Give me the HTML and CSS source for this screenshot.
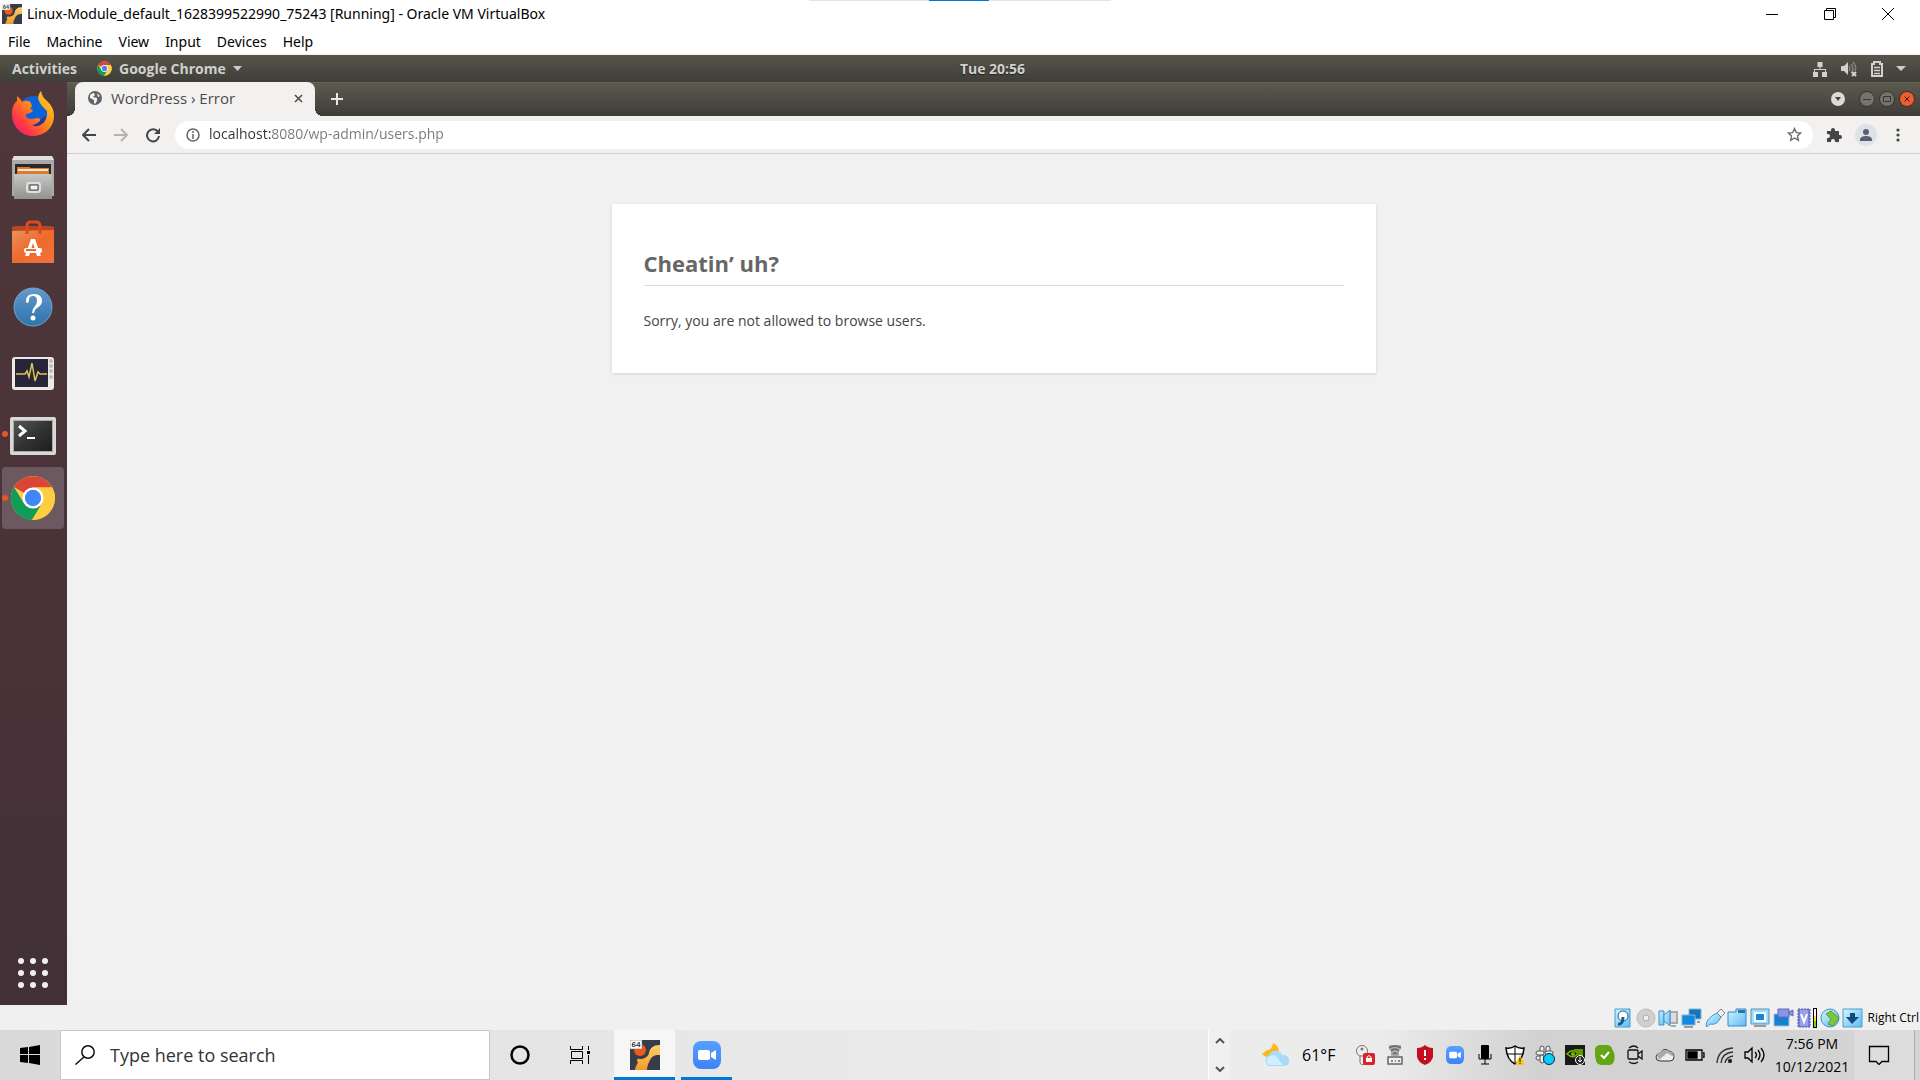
FILE: index.html
```html
<!DOCTYPE html>
<html lang="en">
<head>
<meta charset="utf-8">
<title>Linux-Module_default_1628399522990_75243 [Running] - Oracle VM VirtualBox</title>
<link rel="stylesheet" href="styles.css">
</head>
<body>
<svg class="defs" width="0" height="0" aria-hidden="true">
  <defs>
    <linearGradient id="gold" x1="0" y1="0" x2="0" y2="1"><stop offset="0" stop-color="#ffd070"/><stop offset="1" stop-color="#f09a28"/></linearGradient>
    <linearGradient id="fox" x1="1" y1="0" x2="0" y2="1"><stop offset="0" stop-color="#ffe02a"/><stop offset=".45" stop-color="#ff8a16"/><stop offset=".75" stop-color="#ff3647"/><stop offset="1" stop-color="#e3178f"/></linearGradient>
    <linearGradient id="steel" x1="0" y1="0" x2="0" y2="1"><stop offset="0" stop-color="#c6c6c4"/><stop offset="1" stop-color="#92928f"/></linearGradient>
    <linearGradient id="bag" x1="0" y1="0" x2="1" y2="1"><stop offset="0" stop-color="#e8935a"/><stop offset=".5" stop-color="#ee6a2c"/><stop offset="1" stop-color="#f4713f"/></linearGradient>
    <linearGradient id="helpb" x1="0" y1="0" x2="0" y2="1"><stop offset="0" stop-color="#6699cc"/><stop offset="1" stop-color="#2c73ab"/></linearGradient>
    <linearGradient id="term" x1="0" y1="0" x2="1" y2="1"><stop offset="0" stop-color="#565656"/><stop offset=".5" stop-color="#333"/><stop offset="1" stop-color="#1d1d1d"/></linearGradient>
    <linearGradient id="sky" x1="0" y1="0" x2="1" y2="1"><stop offset="0" stop-color="#d6f2ff"/><stop offset="1" stop-color="#5cbcf4"/></linearGradient>
    <linearGradient id="zoomb" x1="0" y1="0" x2="0" y2="1"><stop offset="0" stop-color="#56a0ff"/><stop offset="1" stop-color="#3f83f8"/></linearGradient>
    <symbol id="chrome" viewBox="0 0 48 48">
      <circle cx="24" cy="24" r="23" fill="#ffcd40"/>
      <path d="M24 24 4.100 12.500A23 23 0 0 1 44 13H24z" fill="#db4437"/>
      <path d="M4.100 12.500A23 23 0 0 0 23 47L33.500 29.500 24 24 14.500 29.500z" fill="#0f9d58"/>
      <path d="M24 13h20a23 23 0 0 1-21 34l11-18z" fill="#ffcd40"/>
      <circle cx="24" cy="24" r="11" fill="#fff"/><circle cx="24" cy="24" r="8.500" fill="#4285f4"/>
    </symbol>
    <symbol id="vbox" viewBox="0 0 30 30">
      <path d="M0 0h30v30H0z" fill="#363c49"/><circle cx="10" cy="10" r="6" fill="#f0591c"/>
      <path d="M30 5v10c-7 0-8 2-10 5-2 4-3 7-3 10H5c0-3 2-5 3-8-2-1-1-4 2-3 4 0 8-2 9-6 1-5 4-8 11-8z" fill="url(#gold)"/>
      <path d="M0 0h12v9H0z" fill="#fff" stroke="#777" stroke-width=".600"/>
      <text x="6" y="7" font-family="Liberation Sans" font-size="8" font-weight="bold" text-anchor="middle" fill="#333">64</text>
    </symbol>
    <symbol id="zoom" viewBox="0 0 28 28">
      <rect width="28" height="28" rx="8" fill="url(#zoomb)"/><rect x="5" y="9" width="12" height="10" rx="2" fill="#fff"/><path d="M18 12l5-3v10l-5-3z" fill="#fff"/>
    </symbol>
  </defs>
</svg>

<header class="titlebar">
  <svg class="app-icon" viewBox="0 0 30 30"><use href="#vbox"/></svg>
  <span class="window-title">Linux-Module_default_1628399522990_75243 [Running] - Oracle VM VirtualBox</span>
  <div class="caption-buttons">
    <button aria-label="Minimize"><svg width="14" height="14"><path d="M1 7.500h12" stroke="#000"/></svg></button>
    <button aria-label="Restore"><svg width="14" height="14" fill="none" stroke="#000"><path d="M1.500 3.500h9v9h-9zM3.500 3V1.500h9v9H11"/></svg></button>
    <button aria-label="Close"><svg width="14" height="14"><path d="M1 1l12 12M13 1 1 13" stroke="#000"/></svg></button>
  </div>
  <div class="share-strip"></div>
</header>
<nav class="menubar">
  <button>File</button><button>Machine</button><button>View</button><button>Input</button><button>Devices</button><button>Help</button>
</nav>

<div class="panel">
  <div class="panel-left">
    <button class="activities">Activities</button>
    <button class="app-menu"><svg width="15" height="15"><use href="#chrome"/></svg>Google Chrome<svg width="9" height="5"><path d="M0 0h9L4.500 5z" fill="#ccc"/></svg></button>
  </div>
  <time class="panel-clock">Tue 20:56</time>
  <div class="indicators">
    <svg width="16" height="16" fill="#d0d0ce"><path d="M5.500 1h5v5h-5zM1 11h5v5H1zM10 11h5v5h-5zM7.500 6h1v2H14v3h-1V9H3v2H2V8h5.500z"/></svg>
    <svg width="18" height="16"><path d="M1 5h3l4-4v13l-4-4H1z" fill="#d0d0ce"/><g fill="none" stroke="#85837b" stroke-width="1.500"><path d="M9 5q2 3 0 5M11 3q4 5 0 9M13 1q4 5 2 9"/></g><path d="M12 11l4 4m0-4-4 4" stroke="#d0d0ce" stroke-width="2"/></svg>
    <svg width="14" height="18" fill="none" stroke="#d0d0ce" stroke-width="2"><path d="M2 4h2V2h6v2h2v12H2z"/><path d="M4 7.500h6M4 10.500h6M4 13.500h6" stroke-width="1.500"/></svg>
    <svg width="10" height="6"><path d="M0 0h10L5 5z" fill="#ccc"/></svg>
  </div>
</div>

<div class="desktop">
  <aside class="dock">
    <button aria-label="Firefox"><svg width="44" height="46" viewBox="0 0 44 46"><circle cx="23" cy="22" r="17" fill="#0c63d8"/><path d="M13 28q10 9 22-4l-4 14-14-1z" fill="#32318c"/><path d="M1 23C1 16 3 12 6 10V5q4 3 5 6 3-2 7-1 2 1 3 5l-2 3 3 1q-1 3-7 4-1 4 4 5 4 0 7-1 4 0 3 3-3 3-8 4 5 3 10-1 6-4 5-13Q28 13 27 7q0-4 3-7 1 6 6 10 7 6 7 15c0 11-9 20-21 20S1 35 1 23z" fill="url(#fox)"/></svg></button>
    <button aria-label="Files"><svg width="44" height="46" viewBox="0 0 44 46"><path d="M1 5 3 1h38l2 4v36H1z" fill="#aaa"/><path d="M1 5 3 1h38l2 4z" fill="#e1dfdf"/><path d="M4 9h36v11H4z" fill="#2d2928"/><path d="M6 12h12l2 1h18v7H6z" fill="#db7c35"/><path d="M7 15h30" stroke="#fce5cc" stroke-width="2"/><path d="M3 19h38v25H3z" fill="url(#steel)"/><rect x="16" y="28" width="13" height="9" rx="2" fill="#aaa" stroke="#dedede" stroke-width="2"/><path d="M19 30h8v5h-8z" fill="#f3f3f3" stroke="#4b4b4b"/></svg></button>
    <button aria-label="Ubuntu Software"><svg width="44" height="46" viewBox="0 0 44 46"><path d="M1 8 5 7h34l4 1v7H1z" fill="#bd4620"/><path d="M1 12 43 11v33H1z" fill="url(#bag)"/><path d="M16 15V7q0-4 3-4h6q4 0 4 4v8" fill="none" stroke="#dc4b1b" stroke-width="3"/><path d="M14 37l6-17h4l6 17h-4l-4-13-4 13z" fill="#fff"/><rect x="13" y="29" width="18" height="5" rx="2" fill="#fff"/><path d="M15 31h10" stroke="#ee6a2c" stroke-width="2"/></svg></button>
    <button aria-label="Help"><svg width="44" height="46" viewBox="0 0 44 46"><circle cx="22" cy="24" r="19" fill="url(#helpb)" stroke="#74a4cf"/><path d="M15 18q0-7 8-7 8 0 8 7 0 4-5 7-3 2-3 5h-2q0-4 3-7 2-2 2-5 0-5-4-5-4 0-4 4 0 3-2 3-1 0-1-2z" fill="#fff"/><circle cx="22" cy="35" r="2.500" fill="#fff"/></svg></button>
    <button aria-label="System Monitor"><svg width="44" height="46" viewBox="0 0 44 46"><rect x="1" y="10" width="42" height="33" rx="3" fill="#eee9e6"/><path d="M4 12h33v28H4z" fill="#28243a"/><path d="M5 27h9l2-3 2 6 3-14 3 18 3-9 2 2h7" fill="none" stroke="#d6ca4d" stroke-width="1.500"/><g fill="#bbb"><circle cx="40" cy="14" r="2"/><circle cx="40" cy="19" r="2"/><circle cx="40" cy="24" r="2"/><circle cx="40" cy="30" r="2"/></g></svg></button>
    <button aria-label="Terminal" class="running"><svg width="46" height="46" viewBox="0 0 46 46"><rect y="6" width="46" height="38" rx="2" fill="#d8d8d6"/><path d="M3 9h40v32H3z" fill="#aaa"/><path d="M4 10h38v30H4z" fill="url(#term)"/><path d="M9 15l6 5-6 5" fill="none" stroke="#fff" stroke-width="3"/><path d="M17 27h8" stroke="#fff" stroke-width="2"/></svg></button>
    <button aria-label="Google Chrome" class="running active"><svg width="46" height="46"><use href="#chrome"/></svg></button>
    <button aria-label="Show Applications" class="apps"><svg width="32" height="32" fill="#f2f1f0"><g id="dots"><circle cx="4" cy="4" r="3"/><circle cx="16" cy="4" r="3"/><circle cx="28" cy="4" r="3"/></g><use href="#dots" y="12"/><use href="#dots" y="24"/></svg></button>
  </aside>

  <div class="browser">
    <div class="tabstrip">
      <div class="tab">
        <svg width="14" height="14" viewBox="0 0 14 14"><circle cx="7" cy="7" r="7" fill="#5f6368"/><path d="M2 4q2-2 4-2l1 2-2 2 4 1v3l-2 3-1-1V9L2 7zM9 2l3 3-2 1z" fill="#f2f1f0"/></svg>
        <span>WordPress › Error</span>
        <button aria-label="Close tab"><svg width="9" height="9"><path d="M1 1l7 7M8 1 1 8" stroke="#4b4b4b" stroke-width="1.500"/></svg></button>
      </div>
      <button class="new-tab" aria-label="New tab"><svg width="12" height="12"><path d="M6 0v12M0 6h12" stroke="#e8e6e1" stroke-width="2"/></svg></button>
      <div class="window-buttons">
        <button class="tab-search" aria-label="Search tabs"><svg width="14" height="14"><circle cx="7" cy="7" r="7" fill="#dfdbd2"/><path d="M4 5h6l-3 4z" fill="#45433e"/></svg></button>
        <button aria-label="Minimize"><svg width="16" height="16"><circle cx="8" cy="8" r="7.500" fill="#74736d" stroke="#34332f"/><path d="M4 8.500h8" stroke="#363530"/></svg></button>
        <button aria-label="Maximize"><svg width="16" height="16"><circle cx="8" cy="8" r="7.500" fill="#74736d" stroke="#34332f"/><path d="M4.500 5.500h7v5h-7z" fill="none" stroke="#363530"/></svg></button>
        <button aria-label="Close"><svg width="16" height="16"><circle cx="8" cy="8" r="7.500" fill="#ed5f32" stroke="#512519"/><path d="M5.500 5.500l5 5m0-5-5 5" stroke="#3c1a10"/></svg></button>
      </div>
    </div>
    <div class="toolbar">
      <button aria-label="Back"><svg width="14" height="14" fill="none" stroke="#454545" stroke-width="2"><path d="M14 7H2M7 1 1 7l6 6"/></svg></button>
      <button aria-label="Forward"><svg width="14" height="14" fill="none" stroke="#b5b4b3" stroke-width="2"><path d="M0 7h12M7 1l6 6-6 6"/></svg></button>
      <button aria-label="Reload"><svg width="16" height="16" fill="none" stroke="#454545" stroke-width="2"><path d="M13 5a6 6 0 1 0 1 4"/><path d="M15 1v6H9z" fill="#454545" stroke="none"/></svg></button>
      <div class="omnibox">
        <svg width="14" height="14" fill="none" stroke="#5f6368" stroke-width="1.500"><circle cx="7" cy="7" r="6"/><path d="M7 3v2M7 6v5"/></svg>
        <input type="text" aria-label="Address" value="localhost:8080/wp-admin/users.php">
        <button aria-label="Bookmark"><svg width="15" height="15" viewBox="0 0 15 15" fill="none" stroke="#666" stroke-width="1.300"><path d="M7.500 1.500 9.300 5.600l4.400.4-3.300 3 1 4.300-3.900-2.300-3.900 2.300 1-4.300-3.300-3 4.400-.4z"/></svg></button>
      </div>
      <button aria-label="Extensions"><svg width="16" height="16" viewBox="0 0 16 16"><path d="M1 4h4V3a2 2 0 0 1 4 0v1h4v4h1a2 2 0 0 1 0 4h-1v3H9v-1a2 2 0 0 0-4 0v1H1v-4h1a2 2 0 0 0 0-4H1z" fill="#454545"/></svg></button>
      <button aria-label="Profile"><svg width="22" height="22"><circle cx="11" cy="11" r="11" fill="#dee1e6"/><circle cx="11" cy="8" r="3" fill="#576071"/><path d="M5 17v-2q1-3 6-3t6 3v2z" fill="#576071"/></svg></button>
      <button aria-label="Menu"><svg width="4" height="14" fill="#454545"><circle cx="2" cy="2" r="1.600"/><circle cx="2" cy="7" r="1.600"/><circle cx="2" cy="12" r="1.600"/></svg></button>
    </div>
    <main class="page">
      <section class="error-card">
        <h1>Cheatin’ uh?</h1>
        <p>Sorry, you are not allowed to browse users.</p>
      </section>
    </main>
  </div>
</div>

<div class="vm-status">
  <svg width="23" height="20"><path d="M4 1h15v18H4z" fill="url(#sky)" stroke="#4a9cc8"/><circle cx="12" cy="8" r="5" fill="#fff" stroke="#1d5f94"/><path d="M7 16q5 1 5-7" fill="none" stroke="#175b92" stroke-width="3"/></svg>
  <svg width="23" height="20"><circle cx="12" cy="10" r="9" fill="#d0d0d0" stroke="#bbb"/><circle cx="12" cy="10" r="3" fill="#eee" stroke="#aaa"/></svg>
  <svg width="23" height="20"><path d="M13 4h7v11h-7zM14 18h5" fill="#ddd" stroke="#aaa" stroke-width="2"/><path d="M2 3h5v14H2z" fill="url(#sky)" stroke="#3b91c7"/><path d="M7 7l6-5v16l-6-5z" fill="url(#sky)" stroke="#3b91c7"/></svg>
  <svg width="23" height="20" stroke="#86b4d4"><path d="M9 1h12v10H9z" fill="#1674bd"/><path d="M2 7h13v10H2z" fill="#1389e0"/><path d="M4 19h9M17 14h3" stroke="#999" stroke-width="2"/></svg>
  <svg width="23" height="20"><path d="M14 5l4-4 4 4-4 4z" fill="#eee" stroke="#888"/><path d="M3 18q0-8 11-13l4 4q-4 9-11 7l-3 3z" fill="url(#sky)" stroke="#4597c6"/></svg>
  <svg width="23" height="20"><path d="M2 18V4h8V1h10v17z" fill="url(#sky)" stroke="#2e8bcc"/><path d="M12 2h7v3h-7z" fill="#2675aa"/></svg>
  <svg width="23" height="20"><path d="M2 1h18v15H2z" fill="#a7dcf8" stroke="#4695bd"/><path d="M6 5h10v8H6z" fill="#1688dd" stroke="#fff" stroke-width="2"/><path d="M5 18h12" stroke="#999" stroke-width="2"/></svg>
  <svg width="23" height="20"><path d="M2 6h15v12H2z" fill="#167fd1" stroke="#a0c4df"/><path d="M6 1h11v8H6zM17 4l4-2v6l-4-2z" fill="#8995e8" stroke="#6269bb"/></svg>
  <svg width="17" height="20"><path d="M3 1h12v18H3z" fill="#747ed4" stroke="#5964ae" stroke-dasharray="2 1"/><path d="M5 2h8v16H5z" fill="#98a0ed"/><path d="M6 6l3 8 3-8" fill="none" stroke="#fff" stroke-width="2"/></svg>
  <svg width="6" height="20"><path d="M1 0h4v20H1z" fill="#000"/><path d="M2 1h2v7H2z" fill="#fff"/><path d="M2 8h2v5H2z" fill="#ffe21d"/><path d="M2 13h2v6H2z" fill="#54e320"/></svg>
  <svg width="23" height="20"><circle cx="12" cy="10" r="9" fill="url(#sky)" stroke="#3e94bd"/><path d="M8 6l5-3 8 7-6 8-5-2 3-5z" fill="#7cc83b" stroke="#5b9d31"/></svg>
  <svg width="23" height="20"><path d="M2 1h19v18H2z" fill="url(#sky)" stroke="#49a0cc"/><path d="M9 5h5v4h4l-7 7-6-7h4z" fill="#124a78"/></svg>
  <span>Right Ctrl</span>
</div>

<footer class="taskbar">
  <button class="start" aria-label="Start"><svg width="20" height="20"><path d="M0 3l8-1v7H0zM9 2l11-2v9H9zM0 10h8v8l-8-1zM9 10h11v10L9 18z"/></svg></button>
  <label class="search"><svg width="20" height="20" fill="none" stroke="#111" stroke-width="1.500"><circle cx="13" cy="7" r="6.200"/><path d="M9 12 .500 19.500"/></svg><input type="text" aria-label="Search" placeholder="Type here to search"></label>
  <button class="task" aria-label="Cortana"><svg width="20" height="20"><circle cx="10" cy="10" r="8.500" fill="none" stroke="#000" stroke-width="2.500"/></svg></button>
  <button class="task" aria-label="Task view"><svg width="20" height="20" fill="none" stroke="#000"><path d="M.500 1v3.500h12V1M.500 19v-3.500h12V19M1.500 6.500h11v7h-11zM18.500 1v4M18.500 10v9"/><path d="M17 6h3v3h-3z" fill="#000" stroke="none"/></svg></button>
  <button class="task current" aria-label="VirtualBox"><svg width="30" height="30"><use href="#vbox"/></svg></button>
  <button class="task open" aria-label="Zoom"><svg width="28" height="28"><use href="#zoom"/></svg></button>
  <div class="scroll">
    <button aria-label="Up"><svg width="10" height="6" fill="none" stroke="#555" stroke-width="2"><path d="M1 5l4-4 4 4"/></svg></button>
    <button aria-label="Down"><svg width="10" height="6" fill="none" stroke="#555" stroke-width="2"><path d="M1 1l4 4 4-4"/></svg></button>
  </div>
  <button class="weather"><svg width="28" height="24"><path d="M11 0q-1 7-6 7l-5 4q5 5 11 3l6-6q-1-6-6-8z" fill="#fcb71c"/><path d="M7 23a6 6 0 0 1 0-11q2-5 8-4 4 1 5 4 7-1 7 6 0 5-5 5z" fill="#a8dbf8"/><path d="M7 22a5 5 0 0 1 1-9q5-3 8 3l5 6z" fill="#cfeeff"/></svg>61°F</button>
  <div class="tray">
    <svg width="20" height="20"><g fill="#eee" stroke="#777"><circle cx="7" cy="6" r="5.500"/><path d="M5 11h5v8l-3 1-2-2z"/></g><circle cx="7" cy="4" r="1.500" fill="#777"/><rect x="8" y="8" width="12" height="12" rx="2" fill="#d92229"/><path d="M11 13h6v4h-6z" fill="#fff"/><path d="M12 13v-1q2-3 4 0v1" fill="none" stroke="#fff"/></svg>
    <svg width="18" height="20" fill="none" stroke="#666" stroke-width="1.500"><path d="M3 0h12v4l-2 2v5H5V6L3 4z" fill="#aaa" stroke="none"/><path d="M3 3q6-4 12 0M5 6q4-4 8 0M7 9q2-2 4 0"/><path d="M2 12h14v7H2z" fill="#eee"/><path d="M5 16h2M9 16h1M12 16h2"/></svg>
    <svg width="16" height="20"><path d="M8 0q3 3 8 3v9q-1 5-8 8-7-3-8-8V3q5 0 8-3z" fill="#c50f1f"/><path d="M8 5v6M8 13v2" stroke="#fff" stroke-width="2"/></svg>
    <svg width="18" height="18"><use href="#zoom"/></svg>
    <svg width="14" height="20"><rect x="3" width="8" height="14" rx="1"/><path d="M1 9v5h12V9M7 14v5M3 19h8" fill="none" stroke="#000"/></svg>
    <svg width="20" height="20"><path d="M10 1q4 3 9 2-1 12-9 16Q2 15 1 3q5 1 9-2z" fill="#fff" stroke="#000" stroke-width="1.500"/><path d="M10 1v18M2 9h16" stroke="#000"/><path d="M15 10l5 10H10z" fill="#ffc21c"/><path d="M15 13v4M15 18v1" stroke="#000"/></svg>
    <svg width="20" height="20" fill="#eee" stroke="#555"><rect x="5" y="1" width="4" height="8" rx="2"/><rect x="11" y="1" width="4" height="8" rx="2"/><rect x="1" y="6" width="8" height="4" rx="2"/><rect x="10" y="6" width="8" height="4" rx="2"/><rect x="1" y="11" width="8" height="4" rx="2"/><rect x="5" y="10" width="4" height="8" rx="2"/><circle cx="14" cy="14" r="5.500" fill="#00cfff" stroke="#124"/></svg>
    <svg width="20" height="20"><path d="M0 0h20v20H0z" fill="#191919"/><path d="M2 9q5-6 11-1-4 7-11 1z" fill="none" stroke="#76b900" stroke-width="1.500"/><circle cx="8" cy="9" r="2" fill="#76b900"/><path d="M9 4h9v9h-5q2-5-4-6z" fill="#609900"/><circle cx="15" cy="15" r="4.500" fill="#222" stroke="#fff"/><path d="M15 12v4M13 15l2 2 2-2" stroke="#fff" fill="none"/></svg>
    <svg width="20" height="20"><path d="M0 4Q1 0 5 0h8q4 1 4 4 4 5 2 12-1 4-5 4H6q-5-1-5-5Q-1 9 0 4z" fill="#63a512"/><path d="M6 10l3 3 5-6" fill="none" stroke="#fff" stroke-width="2"/></svg>
    <svg width="16" height="20" fill="none" stroke="#111" stroke-width="1.300"><rect x="1" y="5" width="10" height="9" rx="1"/><path d="M11 9l4-3v8l-4-3M2 3q5-4 9 0M2 17q5 3 9 0"/></svg>
    <svg width="20" height="16"><path d="M5 14q-4 0-4-4 0-3 4-4 4-6 9-2 5 1 5 6 0 4-4 4z" fill="#eee" stroke="#333"/><path d="M2 8q5-7 12-4 4 1 5 6l-7-4-8 7z" fill="#aaa"/></svg>
    <svg width="20" height="12" fill="none" stroke="#000" stroke-width="1.300"><path d="M1 1h16v10H1zM18 4h1v4h-1"/><path d="M3 3h9v6H3z" fill="#000"/></svg>
    <svg width="18" height="18" fill="none" stroke="#333" stroke-width="1.400"><path d="M1 17Q2 3 17 2M5 17Q6 7 17 6M9 17q1-6 8-7"/><circle cx="14" cy="15" r="1.500" fill="#000"/></svg>
    <svg width="22" height="18" fill="none" stroke="#000" stroke-width="1.300"><path d="M1 6h3l4-4v14l-4-4H1zM11 6q3 3 0 6M14 4q4 5 0 10M17 2q6 7 0 14"/></svg>
  </div>
  <time class="clock"><span>7:56 PM</span><span>10/12/2021</span></time>
  <button class="notify" aria-label="Notifications"><svg width="22" height="20"><path d="M1.500 1.500h19v15H14l-3 3-3-3H1.500z" fill="none" stroke="#000" stroke-width="1.300"/></svg></button>
</footer>
</body>
</html>
```
FILE: styles.css
```css
* { box-sizing: border-box; }
body { margin: 0; min-height: 100vh; display: flex; flex-direction: column; font-family: "Open Sans", "Noto Sans", sans-serif; font-size: 14px; color: #000; background: #f0f0f0; }
button { border: 0; padding: 0; margin: 0; background: none; font: inherit; color: inherit; display: flex; align-items: center; justify-content: center; }
input { border: 0; padding: 0; outline: 0; background: none; font: inherit; min-width: 0; flex: 1; }
svg { display: block; flex: none; }
.defs { position: absolute; }

.titlebar { position: relative; display: flex; align-items: center; height: 28px; padding: 0 3px 0 2px; background: #fff; }
.app-icon { width: 20px; height: 20px; }
.titlebar, .menubar { font-family: "Noto Sans", sans-serif; }
.window-title { flex: 1; padding-left: 5px; line-height: 28px; }
.caption-buttons { display: flex; }
.caption-buttons button { width: 58px; height: 28px; }
.share-strip { position: absolute; top: 0; left: 50%; width: 302px; height: 1px; margin-left: -151px; background: linear-gradient(90deg, #e5e5e5 120px, #0078d7 120px 180px, #e5e5e5 180px); }
.menubar { display: flex; gap: 16px; height: 27px; padding: 0 8px; background: #fff; border-bottom: 1px solid #f0f0f0; }

.panel { display: grid; grid-template-columns: 1fr auto 1fr; align-items: center; height: 27px; padding: 0 14px 0 12px; font-weight: 700; color: #d0d0ce; background: linear-gradient(#57544a, #3f3e39); text-shadow: 0 1px 1px #222; }
.panel-left { display: flex; }
.app-menu { gap: 7px; margin-left: 20px; }
.panel-clock { padding-left: 67px; }
.indicators { display: flex; align-items: center; justify-content: flex-end; gap: 12px; }

.desktop { flex: 1; display: flex; min-height: 0; }
.dock { width: 67px; flex: none; display: flex; flex-direction: column; align-items: flex-start; gap: 2px; padding: 1px 0 16px 2px; background: linear-gradient(#4f373b, #493338 55%, #413037); }
.dock button { width: 62px; height: 62px; border-radius: 4px; position: relative; }
.dock .active { background: #6b595f; }
.running::before { content: ""; position: absolute; left: 0; top: 28px; width: 6px; height: 6px; border-radius: 50%; background: #e95420; }
.dock .apps { height: 32px; margin-top: auto; }
.browser { flex: 1; min-width: 0; display: flex; flex-direction: column; }
.tabstrip { display: flex; height: 34px; padding: 0 5px 0 8px; background: linear-gradient(#5d5a4f, #3d3c37); border-top: 1px solid #67645a; }
.tab { position: relative; width: 240px; margin-top: -1px; padding: 0 12px 2px 13px; display: flex; align-items: center; gap: 9px; background: #f2f1f0; border-radius: 8px 8px 0 0; color: #4a4a4a; font-size: 15px; }
.tab::before, .tab::after { content: ""; position: absolute; bottom: 0; width: 8px; height: 8px; }
.tab::before { right: 100%; background: radial-gradient(circle at 0 0, transparent 8px, #f2f1f0 8px); }
.tab::after { left: 100%; background: radial-gradient(circle at 100% 0, transparent 8px, #f2f1f0 8px); }
.tab span { flex: 1; }
.new-tab { width: 44px; padding-bottom: 2px; }
.window-buttons { display: flex; align-items: center; gap: 4px; margin-left: auto; padding-bottom: 2px; }
.tab-search { margin-right: 10px; }
.toolbar { display: flex; align-items: center; height: 38px; padding: 0 6px; background: #f2f1f0; border-bottom: 1px solid #cfcecd; }
.toolbar > button { width: 32px; height: 32px; }
.omnibox { flex: 1; display: flex; align-items: center; height: 28px; margin: 0 5px 0 6px; padding: 0 11px; border-radius: 14px; background: #fff; }
.omnibox input { margin-left: 9px; padding-bottom: 2px; color: transparent; background: linear-gradient(90deg, #2e3436 62px, #757779 62px); -webkit-background-clip: text; background-clip: text; }
.page { flex: 1; padding: 50px 24px; background: #f1f1f1; color: #444; }
.error-card { max-width: 764px; margin: 0 auto; padding: 43px 32px 40px; background: #fff; box-shadow: 0 1px 3px rgba(0,0,0,.13); }
.error-card h1 { margin: 0 0 23px; padding-bottom: 6px; border-bottom: 1px solid #dadada; font-size: 22px; line-height: 32px; color: #666; }
.error-card p { margin: 0; font-size: 14px; line-height: 24px; }

.vm-status { display: flex; align-items: center; justify-content: flex-end; height: 25px; background: #f0f0f0; font-size: 12px; }
.vm-status span { padding: 0 1px 0 4px; }

.taskbar { display: flex; height: 50px; background: linear-gradient(90deg, #d9d9d9, #e6e6e6 30%, #ececec 60%, #ebebeb 72%, #d2d2d2 80%, #d4d4d4); }
.start { width: 60px; }
.search { width: 430px; display: flex; align-items: center; padding-left: 14px; gap: 15px; background: #fff; border: 1px solid #c8c8c8; font-size: 18px; }
.search input::placeholder { color: #333; opacity: 1; }
.task { width: 60px; }
.task.current { width: 61px; margin-left: 4px; background: #f6f6f6; border-bottom: 3px solid #0078d7; }
.task.open { width: 51px; margin-left: 6px; border-bottom: 3px solid #0078d7; }
.task.current, .task.open { padding-top: 3px; }
.scroll { width: 22px; margin-left: auto; display: flex; flex-direction: column; justify-content: space-between; padding: 7px 0; background: #f0f0f0; border-left: 1px solid #fff; }
.scroll button { height: 8px; }
.weather { width: 120px; padding: 0 14px 0 32px; gap: 12px; justify-content: flex-start; font-size: 16px; }
.tray { display: grid; grid-template-columns: repeat(14, 30px); align-items: center; justify-items: center; }
.clock { width: 84px; display: flex; flex-direction: column; justify-content: center; text-align: center; line-height: 23px; }
.notify { width: 61px; padding-right: 11px; background: #dcdcdc; border-right: 1px solid #aaa; margin-right: 5px; }
```
